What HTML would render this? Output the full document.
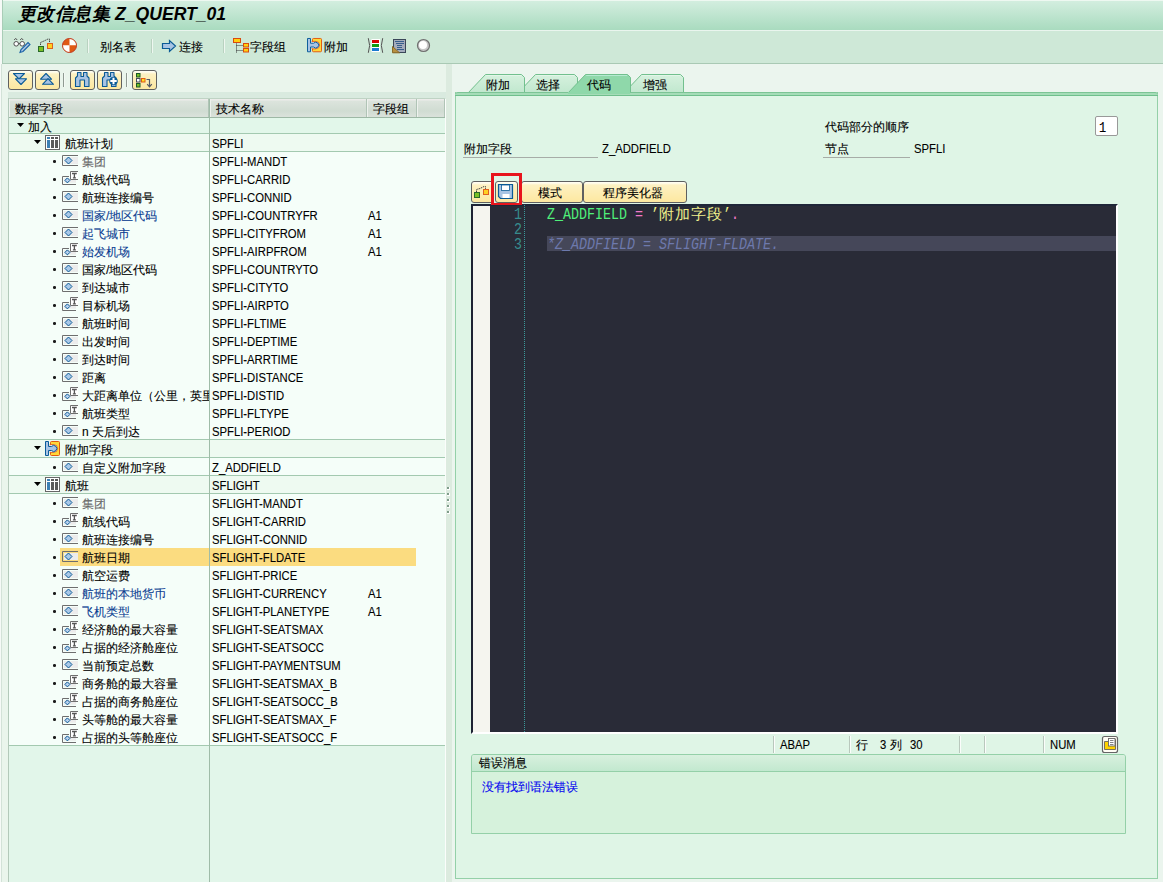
<!DOCTYPE html>
<html><head><meta charset="utf-8"><style>
*{box-sizing:border-box}
html,body{margin:0;padding:0}
body{width:1163px;height:882px;overflow:hidden;position:relative;background:#ebf5ee;font-family:"Liberation Sans",sans-serif;font-size:12px;color:#000}
.ab{position:absolute}
.t{position:absolute;white-space:nowrap;line-height:14px;-webkit-text-stroke:0.1px currentColor}
.lat{font-size:12px;transform:scaleX(0.94);transform-origin:0 0;-webkit-text-stroke:0.1px currentColor}
.sep{position:absolute;width:2px;border-left:1px solid #b9d2c0;border-right:1px solid #eef7f0}
.btn{position:absolute;border:1px solid #5f6060;border-radius:3px;background:linear-gradient(#fffdf0 0,#fffdf0 1px,#fdf1c2 3px,#fde8a0 100%)}
</style></head><body>

<div class="ab" style="left:0;top:0;width:1163px;height:1px;background:#eef8f1"></div>
<div class="ab" style="left:0;top:1px;width:1163px;height:29px;background:linear-gradient(#d3eedf,#a9dbbf)"></div>
<div class="ab" style="left:0;top:30px;width:1163px;height:1px;background:#eaf5ee"></div>
<div class="t" style="left:18px;top:4px;font-size:18px;line-height:20px;font-weight:bold;font-style:italic;letter-spacing:0.4px;-webkit-text-stroke:0">更改信息集</div>
<div class="t" style="left:115px;top:4px;font-size:17.6px;line-height:20px;font-weight:bold;font-style:italic;-webkit-text-stroke:0">Z_QUERT_01</div>
<div class="ab" style="left:0;top:31px;width:1163px;height:32px;background:#cee8d7"></div>
<div class="ab" style="left:0;top:63px;width:1163px;height:1px;background:#a9c9b4"></div>
<div class="ab" style="left:0;top:0;width:2px;height:882px;background:#f6faf7"></div>
<div class="ab" style="left:2px;top:0;width:1px;height:63px;background:#a9cdb7"></div>
<div class="t" style="left:100px;top:40px">别名表</div>
<div class="t" style="left:179px;top:40px">连接</div>
<div class="t" style="left:250px;top:40px">字段组</div>
<div class="t" style="left:324px;top:40px">附加</div>
<div class="sep" style="left:87px;top:39px;height:14px"></div>
<div class="sep" style="left:151px;top:39px;height:14px"></div>
<div class="sep" style="left:223px;top:39px;height:14px"></div>
<div class="ab" style="left:2px;top:64px;width:444px;height:818px;background:#eaf5ec"></div>
<div class="ab" style="left:1px;top:64px;width:1px;height:818px;background:#d3e2d8"></div>
<div class="ab" style="left:446px;top:64px;width:6px;height:818px;background:#dcebdf"></div>
<div class="ab" style="left:447px;top:487px;width:3px;height:3px;background:#fff"></div><div class="ab" style="left:447px;top:487px;width:2px;height:2px;background:#7f9c8a"></div>
<div class="ab" style="left:447px;top:493px;width:3px;height:3px;background:#fff"></div><div class="ab" style="left:447px;top:493px;width:2px;height:2px;background:#7f9c8a"></div>
<div class="ab" style="left:447px;top:499px;width:3px;height:3px;background:#fff"></div><div class="ab" style="left:447px;top:499px;width:2px;height:2px;background:#7f9c8a"></div>
<div class="ab" style="left:447px;top:505px;width:3px;height:3px;background:#fff"></div><div class="ab" style="left:447px;top:505px;width:2px;height:2px;background:#7f9c8a"></div>
<div class="ab" style="left:447px;top:511px;width:3px;height:3px;background:#fff"></div><div class="ab" style="left:447px;top:511px;width:2px;height:2px;background:#7f9c8a"></div>
<div class="btn" style="left:8px;top:70px;width:25px;height:20px"></div>
<div class="btn" style="left:35px;top:70px;width:25px;height:20px"></div>
<div class="btn" style="left:70px;top:70px;width:25px;height:20px"></div>
<div class="btn" style="left:97px;top:70px;width:25px;height:20px"></div>
<div class="btn" style="left:132px;top:70px;width:25px;height:20px"></div>
<div class="sep" style="left:63px;top:73px;height:14px;border-left-color:#8f9a92;border-right-color:#f4faf5"></div>
<div class="sep" style="left:126px;top:73px;height:14px;border-left-color:#8f9a92;border-right-color:#f4faf5"></div>
<div class="ab" style="left:8px;top:92px;width:438px;height:790px;background:#d9eadf"></div>
<div class="ab" style="left:8px;top:98px;width:1px;height:784px;background:#b3c9ba"></div>
<div class="ab" style="left:9px;top:98px;width:436px;height:1px;background:#bfd3c4"></div>
<div class="ab" style="left:9px;top:99px;width:200px;height:18px;background:linear-gradient(#ececea 0,#ececea 1px,#dce4dd 2px,#d0dcd2 12px,#d9e1da 17px);border-left:1px solid #eef2ee;border-right:1px solid #b0c4b6"></div>
<div class="t" style="left:15px;top:102px">数据字段</div>
<div class="ab" style="left:210px;top:99px;width:157px;height:18px;background:linear-gradient(#ececea 0,#ececea 1px,#dce4dd 2px,#d0dcd2 12px,#d9e1da 17px);border-left:1px solid #eef2ee;border-right:1px solid #b0c4b6"></div>
<div class="t" style="left:216px;top:102px">技术名称</div>
<div class="ab" style="left:367px;top:99px;width:50px;height:18px;background:linear-gradient(#ececea 0,#ececea 1px,#dce4dd 2px,#d0dcd2 12px,#d9e1da 17px);border-left:1px solid #eef2ee;border-right:1px solid #b0c4b6"></div>
<div class="t" style="left:373px;top:102px">字段组</div>
<div class="ab" style="left:417px;top:99px;width:28px;height:18px;background:linear-gradient(#ececea 0,#ececea 1px,#dce4dd 2px,#d0dcd2 12px,#d9e1da 17px);border-left:1px solid #eef2ee;border-right:1px solid #b0c4b6"></div>
<div class="ab" style="left:9px;top:117px;width:436px;height:1px;background:#9db8a5"></div>
<div class="ab" style="left:9px;top:118px;width:436px;height:764px;background:#e2f6ea"></div>
<div class="ab" style="left:445px;top:99px;width:1px;height:783px;background:#fbfdfb"></div>
<div class="ab" style="left:9px;top:118px;width:436px;height:16px;background:#e2f7ea"></div>
<div class="ab" style="left:9px;top:133px;width:436px;height:1px;background:#a3c9b0"></div>
<svg class="ab" style="left:17px;top:123px" width="7" height="4" viewBox="0 0 7 4"><path d="M0 0H7L3.5 4Z" fill="#000"/></svg>
<div class="t" style="left:28px;top:120px">加入</div>
<div class="ab" style="left:9px;top:134px;width:436px;height:18px;background:#eefaf1"></div>
<div class="ab" style="left:9px;top:151px;width:436px;height:1px;background:#a3c9b0"></div>
<svg class="ab" style="left:34px;top:140px" width="7" height="4" viewBox="0 0 7 4"><path d="M0 0H7L3.5 4Z" fill="#000"/></svg>
<svg class="ab" style="left:45px;top:135px" width="15" height="15" viewBox="0 0 15 15"><rect x=".5" y=".5" width="14" height="14" fill="#fff" stroke="#666"/><rect x="2" y="2" width="3" height="2" fill="#3c80b4"/><rect x="6" y="2" width="3" height="2" fill="#5a5a5a"/><rect x="10" y="2" width="3" height="2" fill="#5a5a5a"/><rect x="2" y="5" width="3" height="8" fill="#3c80b4"/><rect x="6" y="5" width="3" height="8" fill="#5a5a5a"/><rect x="10" y="5" width="3" height="8" fill="#5a5a5a"/></svg>
<div class="t" style="left:65px;top:137px">航班计划</div>
<div class="t lat" style="left:212px;top:137px">SPFLI</div>
<div class="ab" style="left:9px;top:152px;width:436px;height:18px;background:#f5fef9"></div>
<div class="ab" style="left:53px;top:160px;width:2.6px;height:2.6px;border-radius:50%;background:#1a1a1a"></div>
<svg class="ab" style="left:62px;top:155px" width="16" height="11" viewBox="0 0 16 11"><path d="M16 .5H.5v10H16" fill="none" stroke="#6e6e6e"/><rect x="2" y="2" width="14" height="7" fill="#ececec"/><path d="M6.5 2 L10 5.5 L6.5 9 L3 5.5Z" fill="#a9c8e8" stroke="#0a5a96" stroke-width="1"/></svg>
<div class="t" style="left:82px;top:155px;width:127px;overflow:hidden;color:#6a6a6a">集团</div>
<div class="t lat" style="left:212px;top:155px">SPFLI-MANDT</div>
<div class="ab" style="left:9px;top:170px;width:436px;height:18px;background:#f5fef9"></div>
<div class="ab" style="left:53px;top:178px;width:2.6px;height:2.6px;border-radius:50%;background:#1a1a1a"></div>
<svg class="ab" style="left:62px;top:171px" width="16" height="14" viewBox="0 0 16 14"><path d="M7 5.5H.5v8H14" fill="none" stroke="#6e6e6e"/><rect x="2" y="7" width="12" height="4.7" fill="#ececec"/><path d="M5.4 6.9L7.9 9.4L5.4 11.9L2.9 9.4Z" fill="#b8d0ec" stroke="#0a5a96" stroke-width="1"/><rect x="8.5" y=".5" width="7.5" height="8" fill="#fff"/><path d="M16 .5H8.5V8.5H16" fill="none" stroke="#6e6e6e"/><path d="M10 2.5H14.8M12.4 2.5V6.8M10.9 6.8H13.9" stroke="#555" stroke-width="1.3" fill="none"/></svg>
<div class="t" style="left:82px;top:173px;width:127px;overflow:hidden;color:#000">航线代码</div>
<div class="t lat" style="left:212px;top:173px">SPFLI-CARRID</div>
<div class="ab" style="left:9px;top:188px;width:436px;height:18px;background:#f5fef9"></div>
<div class="ab" style="left:53px;top:196px;width:2.6px;height:2.6px;border-radius:50%;background:#1a1a1a"></div>
<svg class="ab" style="left:62px;top:191px" width="16" height="11" viewBox="0 0 16 11"><path d="M16 .5H.5v10H16" fill="none" stroke="#6e6e6e"/><rect x="2" y="2" width="14" height="7" fill="#ececec"/><path d="M6.5 2 L10 5.5 L6.5 9 L3 5.5Z" fill="#a9c8e8" stroke="#0a5a96" stroke-width="1"/></svg>
<div class="t" style="left:82px;top:191px;width:127px;overflow:hidden;color:#000">航班连接编号</div>
<div class="t lat" style="left:212px;top:191px">SPFLI-CONNID</div>
<div class="ab" style="left:9px;top:206px;width:436px;height:18px;background:#f5fef9"></div>
<div class="ab" style="left:53px;top:214px;width:2.6px;height:2.6px;border-radius:50%;background:#1a1a1a"></div>
<svg class="ab" style="left:62px;top:209px" width="16" height="11" viewBox="0 0 16 11"><path d="M16 .5H.5v10H16" fill="none" stroke="#6e6e6e"/><rect x="2" y="2" width="14" height="7" fill="#ececec"/><path d="M6.5 2 L10 5.5 L6.5 9 L3 5.5Z" fill="#a9c8e8" stroke="#0a5a96" stroke-width="1"/></svg>
<div class="t" style="left:82px;top:209px;width:127px;overflow:hidden;color:#0b3d91">国家/地区代码</div>
<div class="t lat" style="left:212px;top:209px">SPFLI-COUNTRYFR</div>
<div class="t lat" style="left:368px;top:209px">A1</div>
<div class="ab" style="left:9px;top:224px;width:436px;height:18px;background:#f5fef9"></div>
<div class="ab" style="left:53px;top:232px;width:2.6px;height:2.6px;border-radius:50%;background:#1a1a1a"></div>
<svg class="ab" style="left:62px;top:227px" width="16" height="11" viewBox="0 0 16 11"><path d="M16 .5H.5v10H16" fill="none" stroke="#6e6e6e"/><rect x="2" y="2" width="14" height="7" fill="#ececec"/><path d="M6.5 2 L10 5.5 L6.5 9 L3 5.5Z" fill="#a9c8e8" stroke="#0a5a96" stroke-width="1"/></svg>
<div class="t" style="left:82px;top:227px;width:127px;overflow:hidden;color:#0b3d91">起飞城市</div>
<div class="t lat" style="left:212px;top:227px">SPFLI-CITYFROM</div>
<div class="t lat" style="left:368px;top:227px">A1</div>
<div class="ab" style="left:9px;top:242px;width:436px;height:18px;background:#f5fef9"></div>
<div class="ab" style="left:53px;top:250px;width:2.6px;height:2.6px;border-radius:50%;background:#1a1a1a"></div>
<svg class="ab" style="left:62px;top:243px" width="16" height="14" viewBox="0 0 16 14"><path d="M7 5.5H.5v8H14" fill="none" stroke="#6e6e6e"/><rect x="2" y="7" width="12" height="4.7" fill="#ececec"/><path d="M5.4 6.9L7.9 9.4L5.4 11.9L2.9 9.4Z" fill="#b8d0ec" stroke="#0a5a96" stroke-width="1"/><rect x="8.5" y=".5" width="7.5" height="8" fill="#fff"/><path d="M16 .5H8.5V8.5H16" fill="none" stroke="#6e6e6e"/><path d="M10 2.5H14.8M12.4 2.5V6.8M10.9 6.8H13.9" stroke="#555" stroke-width="1.3" fill="none"/></svg>
<div class="t" style="left:82px;top:245px;width:127px;overflow:hidden;color:#0b3d91">始发机场</div>
<div class="t lat" style="left:212px;top:245px">SPFLI-AIRPFROM</div>
<div class="t lat" style="left:368px;top:245px">A1</div>
<div class="ab" style="left:9px;top:260px;width:436px;height:18px;background:#f5fef9"></div>
<div class="ab" style="left:53px;top:268px;width:2.6px;height:2.6px;border-radius:50%;background:#1a1a1a"></div>
<svg class="ab" style="left:62px;top:263px" width="16" height="11" viewBox="0 0 16 11"><path d="M16 .5H.5v10H16" fill="none" stroke="#6e6e6e"/><rect x="2" y="2" width="14" height="7" fill="#ececec"/><path d="M6.5 2 L10 5.5 L6.5 9 L3 5.5Z" fill="#a9c8e8" stroke="#0a5a96" stroke-width="1"/></svg>
<div class="t" style="left:82px;top:263px;width:127px;overflow:hidden;color:#000">国家/地区代码</div>
<div class="t lat" style="left:212px;top:263px">SPFLI-COUNTRYTO</div>
<div class="ab" style="left:9px;top:278px;width:436px;height:18px;background:#f5fef9"></div>
<div class="ab" style="left:53px;top:286px;width:2.6px;height:2.6px;border-radius:50%;background:#1a1a1a"></div>
<svg class="ab" style="left:62px;top:281px" width="16" height="11" viewBox="0 0 16 11"><path d="M16 .5H.5v10H16" fill="none" stroke="#6e6e6e"/><rect x="2" y="2" width="14" height="7" fill="#ececec"/><path d="M6.5 2 L10 5.5 L6.5 9 L3 5.5Z" fill="#a9c8e8" stroke="#0a5a96" stroke-width="1"/></svg>
<div class="t" style="left:82px;top:281px;width:127px;overflow:hidden;color:#000">到达城市</div>
<div class="t lat" style="left:212px;top:281px">SPFLI-CITYTO</div>
<div class="ab" style="left:9px;top:296px;width:436px;height:18px;background:#f5fef9"></div>
<div class="ab" style="left:53px;top:304px;width:2.6px;height:2.6px;border-radius:50%;background:#1a1a1a"></div>
<svg class="ab" style="left:62px;top:297px" width="16" height="14" viewBox="0 0 16 14"><path d="M7 5.5H.5v8H14" fill="none" stroke="#6e6e6e"/><rect x="2" y="7" width="12" height="4.7" fill="#ececec"/><path d="M5.4 6.9L7.9 9.4L5.4 11.9L2.9 9.4Z" fill="#b8d0ec" stroke="#0a5a96" stroke-width="1"/><rect x="8.5" y=".5" width="7.5" height="8" fill="#fff"/><path d="M16 .5H8.5V8.5H16" fill="none" stroke="#6e6e6e"/><path d="M10 2.5H14.8M12.4 2.5V6.8M10.9 6.8H13.9" stroke="#555" stroke-width="1.3" fill="none"/></svg>
<div class="t" style="left:82px;top:299px;width:127px;overflow:hidden;color:#000">目标机场</div>
<div class="t lat" style="left:212px;top:299px">SPFLI-AIRPTO</div>
<div class="ab" style="left:9px;top:314px;width:436px;height:18px;background:#f5fef9"></div>
<div class="ab" style="left:53px;top:322px;width:2.6px;height:2.6px;border-radius:50%;background:#1a1a1a"></div>
<svg class="ab" style="left:62px;top:317px" width="16" height="11" viewBox="0 0 16 11"><path d="M16 .5H.5v10H16" fill="none" stroke="#6e6e6e"/><rect x="2" y="2" width="14" height="7" fill="#ececec"/><path d="M6.5 2 L10 5.5 L6.5 9 L3 5.5Z" fill="#a9c8e8" stroke="#0a5a96" stroke-width="1"/></svg>
<div class="t" style="left:82px;top:317px;width:127px;overflow:hidden;color:#000">航班时间</div>
<div class="t lat" style="left:212px;top:317px">SPFLI-FLTIME</div>
<div class="ab" style="left:9px;top:332px;width:436px;height:18px;background:#f5fef9"></div>
<div class="ab" style="left:53px;top:340px;width:2.6px;height:2.6px;border-radius:50%;background:#1a1a1a"></div>
<svg class="ab" style="left:62px;top:335px" width="16" height="11" viewBox="0 0 16 11"><path d="M16 .5H.5v10H16" fill="none" stroke="#6e6e6e"/><rect x="2" y="2" width="14" height="7" fill="#ececec"/><path d="M6.5 2 L10 5.5 L6.5 9 L3 5.5Z" fill="#a9c8e8" stroke="#0a5a96" stroke-width="1"/></svg>
<div class="t" style="left:82px;top:335px;width:127px;overflow:hidden;color:#000">出发时间</div>
<div class="t lat" style="left:212px;top:335px">SPFLI-DEPTIME</div>
<div class="ab" style="left:9px;top:350px;width:436px;height:18px;background:#f5fef9"></div>
<div class="ab" style="left:53px;top:358px;width:2.6px;height:2.6px;border-radius:50%;background:#1a1a1a"></div>
<svg class="ab" style="left:62px;top:353px" width="16" height="11" viewBox="0 0 16 11"><path d="M16 .5H.5v10H16" fill="none" stroke="#6e6e6e"/><rect x="2" y="2" width="14" height="7" fill="#ececec"/><path d="M6.5 2 L10 5.5 L6.5 9 L3 5.5Z" fill="#a9c8e8" stroke="#0a5a96" stroke-width="1"/></svg>
<div class="t" style="left:82px;top:353px;width:127px;overflow:hidden;color:#000">到达时间</div>
<div class="t lat" style="left:212px;top:353px">SPFLI-ARRTIME</div>
<div class="ab" style="left:9px;top:368px;width:436px;height:18px;background:#f5fef9"></div>
<div class="ab" style="left:53px;top:376px;width:2.6px;height:2.6px;border-radius:50%;background:#1a1a1a"></div>
<svg class="ab" style="left:62px;top:371px" width="16" height="11" viewBox="0 0 16 11"><path d="M16 .5H.5v10H16" fill="none" stroke="#6e6e6e"/><rect x="2" y="2" width="14" height="7" fill="#ececec"/><path d="M6.5 2 L10 5.5 L6.5 9 L3 5.5Z" fill="#a9c8e8" stroke="#0a5a96" stroke-width="1"/></svg>
<div class="t" style="left:82px;top:371px;width:127px;overflow:hidden;color:#000">距离</div>
<div class="t lat" style="left:212px;top:371px">SPFLI-DISTANCE</div>
<div class="ab" style="left:9px;top:386px;width:436px;height:18px;background:#f5fef9"></div>
<div class="ab" style="left:53px;top:394px;width:2.6px;height:2.6px;border-radius:50%;background:#1a1a1a"></div>
<svg class="ab" style="left:62px;top:387px" width="16" height="14" viewBox="0 0 16 14"><path d="M7 5.5H.5v8H14" fill="none" stroke="#6e6e6e"/><rect x="2" y="7" width="12" height="4.7" fill="#ececec"/><path d="M5.4 6.9L7.9 9.4L5.4 11.9L2.9 9.4Z" fill="#b8d0ec" stroke="#0a5a96" stroke-width="1"/><rect x="8.5" y=".5" width="7.5" height="8" fill="#fff"/><path d="M16 .5H8.5V8.5H16" fill="none" stroke="#6e6e6e"/><path d="M10 2.5H14.8M12.4 2.5V6.8M10.9 6.8H13.9" stroke="#555" stroke-width="1.3" fill="none"/></svg>
<div class="t" style="left:82px;top:389px;width:127px;overflow:hidden;color:#000">大距离单位（公里，英里）</div>
<div class="t lat" style="left:212px;top:389px">SPFLI-DISTID</div>
<div class="ab" style="left:9px;top:404px;width:436px;height:18px;background:#f5fef9"></div>
<div class="ab" style="left:53px;top:412px;width:2.6px;height:2.6px;border-radius:50%;background:#1a1a1a"></div>
<svg class="ab" style="left:62px;top:405px" width="16" height="14" viewBox="0 0 16 14"><path d="M7 5.5H.5v8H14" fill="none" stroke="#6e6e6e"/><rect x="2" y="7" width="12" height="4.7" fill="#ececec"/><path d="M5.4 6.9L7.9 9.4L5.4 11.9L2.9 9.4Z" fill="#b8d0ec" stroke="#0a5a96" stroke-width="1"/><rect x="8.5" y=".5" width="7.5" height="8" fill="#fff"/><path d="M16 .5H8.5V8.5H16" fill="none" stroke="#6e6e6e"/><path d="M10 2.5H14.8M12.4 2.5V6.8M10.9 6.8H13.9" stroke="#555" stroke-width="1.3" fill="none"/></svg>
<div class="t" style="left:82px;top:407px;width:127px;overflow:hidden;color:#000">航班类型</div>
<div class="t lat" style="left:212px;top:407px">SPFLI-FLTYPE</div>
<div class="ab" style="left:9px;top:422px;width:436px;height:18px;background:#f5fef9"></div>
<div class="ab" style="left:9px;top:439px;width:436px;height:1px;background:#a3c9b0"></div>
<div class="ab" style="left:53px;top:430px;width:2.6px;height:2.6px;border-radius:50%;background:#1a1a1a"></div>
<svg class="ab" style="left:62px;top:425px" width="16" height="11" viewBox="0 0 16 11"><path d="M16 .5H.5v10H16" fill="none" stroke="#6e6e6e"/><rect x="2" y="2" width="14" height="7" fill="#ececec"/><path d="M6.5 2 L10 5.5 L6.5 9 L3 5.5Z" fill="#a9c8e8" stroke="#0a5a96" stroke-width="1"/></svg>
<div class="t" style="left:82px;top:425px;width:127px;overflow:hidden;color:#000">n 天后到达</div>
<div class="t lat" style="left:212px;top:425px">SPFLI-PERIOD</div>
<div class="ab" style="left:9px;top:440px;width:436px;height:18px;background:#eefaf1"></div>
<div class="ab" style="left:9px;top:457px;width:436px;height:1px;background:#a3c9b0"></div>
<svg class="ab" style="left:34px;top:446px" width="7" height="4" viewBox="0 0 7 4"><path d="M0 0H7L3.5 4Z" fill="#000"/></svg>
<svg class="ab" style="left:45px;top:441px" width="16" height="15" viewBox="0 0 16 15"><rect x="5.5" y=".5" width="9" height="14" rx="1" fill="#ffd838" stroke="#e05a10"/><path d="M5 3.6H8.7A3.9 3.9 0 0 1 8.7 11.4H5Z" fill="#e4f2fa" stroke="#e05a10" stroke-width="0.9"/><rect x="4" y="4.3" width="2" height="6.4" fill="#e4f2fa"/><path d="M.5 .5H3.5V5.5H6.5A3 3 0 1 1 6.5 9.5H3.5V14.5H.5Z" fill="#a8c4e4" stroke="#0a5c9a"/></svg>
<div class="t" style="left:65px;top:443px">附加字段</div>
<div class="ab" style="left:9px;top:458px;width:436px;height:18px;background:#f5fef9"></div>
<div class="ab" style="left:9px;top:475px;width:436px;height:1px;background:#a3c9b0"></div>
<div class="ab" style="left:53px;top:466px;width:2.6px;height:2.6px;border-radius:50%;background:#1a1a1a"></div>
<svg class="ab" style="left:62px;top:461px" width="16" height="11" viewBox="0 0 16 11"><path d="M16 .5H.5v10H16" fill="none" stroke="#6e6e6e"/><rect x="2" y="2" width="14" height="7" fill="#ececec"/><path d="M6.5 2 L10 5.5 L6.5 9 L3 5.5Z" fill="#a9c8e8" stroke="#0a5a96" stroke-width="1"/></svg>
<div class="t" style="left:82px;top:461px;width:127px;overflow:hidden;color:#000">自定义附加字段</div>
<div class="t lat" style="left:212px;top:461px">Z_ADDFIELD</div>
<div class="ab" style="left:9px;top:476px;width:436px;height:18px;background:#eefaf1"></div>
<div class="ab" style="left:9px;top:493px;width:436px;height:1px;background:#a3c9b0"></div>
<svg class="ab" style="left:34px;top:482px" width="7" height="4" viewBox="0 0 7 4"><path d="M0 0H7L3.5 4Z" fill="#000"/></svg>
<svg class="ab" style="left:45px;top:477px" width="15" height="15" viewBox="0 0 15 15"><rect x=".5" y=".5" width="14" height="14" fill="#fff" stroke="#666"/><rect x="2" y="2" width="3" height="2" fill="#3c80b4"/><rect x="6" y="2" width="3" height="2" fill="#5a5a5a"/><rect x="10" y="2" width="3" height="2" fill="#5a5a5a"/><rect x="2" y="5" width="3" height="8" fill="#3c80b4"/><rect x="6" y="5" width="3" height="8" fill="#5a5a5a"/><rect x="10" y="5" width="3" height="8" fill="#5a5a5a"/></svg>
<div class="t" style="left:65px;top:479px">航班</div>
<div class="t lat" style="left:212px;top:479px">SFLIGHT</div>
<div class="ab" style="left:9px;top:494px;width:436px;height:18px;background:#f5fef9"></div>
<div class="ab" style="left:53px;top:502px;width:2.6px;height:2.6px;border-radius:50%;background:#1a1a1a"></div>
<svg class="ab" style="left:62px;top:497px" width="16" height="11" viewBox="0 0 16 11"><path d="M16 .5H.5v10H16" fill="none" stroke="#6e6e6e"/><rect x="2" y="2" width="14" height="7" fill="#ececec"/><path d="M6.5 2 L10 5.5 L6.5 9 L3 5.5Z" fill="#a9c8e8" stroke="#0a5a96" stroke-width="1"/></svg>
<div class="t" style="left:82px;top:497px;width:127px;overflow:hidden;color:#6a6a6a">集团</div>
<div class="t lat" style="left:212px;top:497px">SFLIGHT-MANDT</div>
<div class="ab" style="left:9px;top:512px;width:436px;height:18px;background:#f5fef9"></div>
<div class="ab" style="left:53px;top:520px;width:2.6px;height:2.6px;border-radius:50%;background:#1a1a1a"></div>
<svg class="ab" style="left:62px;top:513px" width="16" height="14" viewBox="0 0 16 14"><path d="M7 5.5H.5v8H14" fill="none" stroke="#6e6e6e"/><rect x="2" y="7" width="12" height="4.7" fill="#ececec"/><path d="M5.4 6.9L7.9 9.4L5.4 11.9L2.9 9.4Z" fill="#b8d0ec" stroke="#0a5a96" stroke-width="1"/><rect x="8.5" y=".5" width="7.5" height="8" fill="#fff"/><path d="M16 .5H8.5V8.5H16" fill="none" stroke="#6e6e6e"/><path d="M10 2.5H14.8M12.4 2.5V6.8M10.9 6.8H13.9" stroke="#555" stroke-width="1.3" fill="none"/></svg>
<div class="t" style="left:82px;top:515px;width:127px;overflow:hidden;color:#000">航线代码</div>
<div class="t lat" style="left:212px;top:515px">SFLIGHT-CARRID</div>
<div class="ab" style="left:9px;top:530px;width:436px;height:18px;background:#f5fef9"></div>
<div class="ab" style="left:53px;top:538px;width:2.6px;height:2.6px;border-radius:50%;background:#1a1a1a"></div>
<svg class="ab" style="left:62px;top:533px" width="16" height="11" viewBox="0 0 16 11"><path d="M16 .5H.5v10H16" fill="none" stroke="#6e6e6e"/><rect x="2" y="2" width="14" height="7" fill="#ececec"/><path d="M6.5 2 L10 5.5 L6.5 9 L3 5.5Z" fill="#a9c8e8" stroke="#0a5a96" stroke-width="1"/></svg>
<div class="t" style="left:82px;top:533px;width:127px;overflow:hidden;color:#000">航班连接编号</div>
<div class="t lat" style="left:212px;top:533px">SFLIGHT-CONNID</div>
<div class="ab" style="left:9px;top:548px;width:436px;height:18px;background:#f5fef9"></div>
<div class="ab" style="left:60px;top:548px;width:356px;height:18px;background:#fbdc80"></div>
<div class="ab" style="left:53px;top:556px;width:2.6px;height:2.6px;border-radius:50%;background:#1a1a1a"></div>
<svg class="ab" style="left:62px;top:551px" width="16" height="11" viewBox="0 0 16 11"><path d="M16 .5H.5v10H16" fill="none" stroke="#6e6e6e"/><rect x="2" y="2" width="14" height="7" fill="#ececec"/><path d="M6.5 2 L10 5.5 L6.5 9 L3 5.5Z" fill="#a9c8e8" stroke="#0a5a96" stroke-width="1"/></svg>
<div class="t" style="left:82px;top:551px;width:127px;overflow:hidden;color:#000">航班日期</div>
<div class="t lat" style="left:212px;top:551px">SFLIGHT-FLDATE</div>
<div class="ab" style="left:9px;top:566px;width:436px;height:18px;background:#f5fef9"></div>
<div class="ab" style="left:53px;top:574px;width:2.6px;height:2.6px;border-radius:50%;background:#1a1a1a"></div>
<svg class="ab" style="left:62px;top:569px" width="16" height="11" viewBox="0 0 16 11"><path d="M16 .5H.5v10H16" fill="none" stroke="#6e6e6e"/><rect x="2" y="2" width="14" height="7" fill="#ececec"/><path d="M6.5 2 L10 5.5 L6.5 9 L3 5.5Z" fill="#a9c8e8" stroke="#0a5a96" stroke-width="1"/></svg>
<div class="t" style="left:82px;top:569px;width:127px;overflow:hidden;color:#000">航空运费</div>
<div class="t lat" style="left:212px;top:569px">SFLIGHT-PRICE</div>
<div class="ab" style="left:9px;top:584px;width:436px;height:18px;background:#f5fef9"></div>
<div class="ab" style="left:53px;top:592px;width:2.6px;height:2.6px;border-radius:50%;background:#1a1a1a"></div>
<svg class="ab" style="left:62px;top:587px" width="16" height="11" viewBox="0 0 16 11"><path d="M16 .5H.5v10H16" fill="none" stroke="#6e6e6e"/><rect x="2" y="2" width="14" height="7" fill="#ececec"/><path d="M6.5 2 L10 5.5 L6.5 9 L3 5.5Z" fill="#a9c8e8" stroke="#0a5a96" stroke-width="1"/></svg>
<div class="t" style="left:82px;top:587px;width:127px;overflow:hidden;color:#0b3d91">航班的本地货币</div>
<div class="t lat" style="left:212px;top:587px">SFLIGHT-CURRENCY</div>
<div class="t lat" style="left:368px;top:587px">A1</div>
<div class="ab" style="left:9px;top:602px;width:436px;height:18px;background:#f5fef9"></div>
<div class="ab" style="left:53px;top:610px;width:2.6px;height:2.6px;border-radius:50%;background:#1a1a1a"></div>
<svg class="ab" style="left:62px;top:605px" width="16" height="11" viewBox="0 0 16 11"><path d="M16 .5H.5v10H16" fill="none" stroke="#6e6e6e"/><rect x="2" y="2" width="14" height="7" fill="#ececec"/><path d="M6.5 2 L10 5.5 L6.5 9 L3 5.5Z" fill="#a9c8e8" stroke="#0a5a96" stroke-width="1"/></svg>
<div class="t" style="left:82px;top:605px;width:127px;overflow:hidden;color:#0b3d91">飞机类型</div>
<div class="t lat" style="left:212px;top:605px">SFLIGHT-PLANETYPE</div>
<div class="t lat" style="left:368px;top:605px">A1</div>
<div class="ab" style="left:9px;top:620px;width:436px;height:18px;background:#f5fef9"></div>
<div class="ab" style="left:53px;top:628px;width:2.6px;height:2.6px;border-radius:50%;background:#1a1a1a"></div>
<svg class="ab" style="left:62px;top:621px" width="16" height="14" viewBox="0 0 16 14"><path d="M7 5.5H.5v8H14" fill="none" stroke="#6e6e6e"/><rect x="2" y="7" width="12" height="4.7" fill="#ececec"/><path d="M5.4 6.9L7.9 9.4L5.4 11.9L2.9 9.4Z" fill="#b8d0ec" stroke="#0a5a96" stroke-width="1"/><rect x="8.5" y=".5" width="7.5" height="8" fill="#fff"/><path d="M16 .5H8.5V8.5H16" fill="none" stroke="#6e6e6e"/><path d="M10 2.5H14.8M12.4 2.5V6.8M10.9 6.8H13.9" stroke="#555" stroke-width="1.3" fill="none"/></svg>
<div class="t" style="left:82px;top:623px;width:127px;overflow:hidden;color:#000">经济舱的最大容量</div>
<div class="t lat" style="left:212px;top:623px">SFLIGHT-SEATSMAX</div>
<div class="ab" style="left:9px;top:638px;width:436px;height:18px;background:#f5fef9"></div>
<div class="ab" style="left:53px;top:646px;width:2.6px;height:2.6px;border-radius:50%;background:#1a1a1a"></div>
<svg class="ab" style="left:62px;top:639px" width="16" height="14" viewBox="0 0 16 14"><path d="M7 5.5H.5v8H14" fill="none" stroke="#6e6e6e"/><rect x="2" y="7" width="12" height="4.7" fill="#ececec"/><path d="M5.4 6.9L7.9 9.4L5.4 11.9L2.9 9.4Z" fill="#b8d0ec" stroke="#0a5a96" stroke-width="1"/><rect x="8.5" y=".5" width="7.5" height="8" fill="#fff"/><path d="M16 .5H8.5V8.5H16" fill="none" stroke="#6e6e6e"/><path d="M10 2.5H14.8M12.4 2.5V6.8M10.9 6.8H13.9" stroke="#555" stroke-width="1.3" fill="none"/></svg>
<div class="t" style="left:82px;top:641px;width:127px;overflow:hidden;color:#000">占据的经济舱座位</div>
<div class="t lat" style="left:212px;top:641px">SFLIGHT-SEATSOCC</div>
<div class="ab" style="left:9px;top:656px;width:436px;height:18px;background:#f5fef9"></div>
<div class="ab" style="left:53px;top:664px;width:2.6px;height:2.6px;border-radius:50%;background:#1a1a1a"></div>
<svg class="ab" style="left:62px;top:659px" width="16" height="11" viewBox="0 0 16 11"><path d="M16 .5H.5v10H16" fill="none" stroke="#6e6e6e"/><rect x="2" y="2" width="14" height="7" fill="#ececec"/><path d="M6.5 2 L10 5.5 L6.5 9 L3 5.5Z" fill="#a9c8e8" stroke="#0a5a96" stroke-width="1"/></svg>
<div class="t" style="left:82px;top:659px;width:127px;overflow:hidden;color:#000">当前预定总数</div>
<div class="t lat" style="left:212px;top:659px">SFLIGHT-PAYMENTSUM</div>
<div class="ab" style="left:9px;top:674px;width:436px;height:18px;background:#f5fef9"></div>
<div class="ab" style="left:53px;top:682px;width:2.6px;height:2.6px;border-radius:50%;background:#1a1a1a"></div>
<svg class="ab" style="left:62px;top:675px" width="16" height="14" viewBox="0 0 16 14"><path d="M7 5.5H.5v8H14" fill="none" stroke="#6e6e6e"/><rect x="2" y="7" width="12" height="4.7" fill="#ececec"/><path d="M5.4 6.9L7.9 9.4L5.4 11.9L2.9 9.4Z" fill="#b8d0ec" stroke="#0a5a96" stroke-width="1"/><rect x="8.5" y=".5" width="7.5" height="8" fill="#fff"/><path d="M16 .5H8.5V8.5H16" fill="none" stroke="#6e6e6e"/><path d="M10 2.5H14.8M12.4 2.5V6.8M10.9 6.8H13.9" stroke="#555" stroke-width="1.3" fill="none"/></svg>
<div class="t" style="left:82px;top:677px;width:127px;overflow:hidden;color:#000">商务舱的最大容量</div>
<div class="t lat" style="left:212px;top:677px">SFLIGHT-SEATSMAX_B</div>
<div class="ab" style="left:9px;top:692px;width:436px;height:18px;background:#f5fef9"></div>
<div class="ab" style="left:53px;top:700px;width:2.6px;height:2.6px;border-radius:50%;background:#1a1a1a"></div>
<svg class="ab" style="left:62px;top:693px" width="16" height="14" viewBox="0 0 16 14"><path d="M7 5.5H.5v8H14" fill="none" stroke="#6e6e6e"/><rect x="2" y="7" width="12" height="4.7" fill="#ececec"/><path d="M5.4 6.9L7.9 9.4L5.4 11.9L2.9 9.4Z" fill="#b8d0ec" stroke="#0a5a96" stroke-width="1"/><rect x="8.5" y=".5" width="7.5" height="8" fill="#fff"/><path d="M16 .5H8.5V8.5H16" fill="none" stroke="#6e6e6e"/><path d="M10 2.5H14.8M12.4 2.5V6.8M10.9 6.8H13.9" stroke="#555" stroke-width="1.3" fill="none"/></svg>
<div class="t" style="left:82px;top:695px;width:127px;overflow:hidden;color:#000">占据的商务舱座位</div>
<div class="t lat" style="left:212px;top:695px">SFLIGHT-SEATSOCC_B</div>
<div class="ab" style="left:9px;top:710px;width:436px;height:18px;background:#f5fef9"></div>
<div class="ab" style="left:53px;top:718px;width:2.6px;height:2.6px;border-radius:50%;background:#1a1a1a"></div>
<svg class="ab" style="left:62px;top:711px" width="16" height="14" viewBox="0 0 16 14"><path d="M7 5.5H.5v8H14" fill="none" stroke="#6e6e6e"/><rect x="2" y="7" width="12" height="4.7" fill="#ececec"/><path d="M5.4 6.9L7.9 9.4L5.4 11.9L2.9 9.4Z" fill="#b8d0ec" stroke="#0a5a96" stroke-width="1"/><rect x="8.5" y=".5" width="7.5" height="8" fill="#fff"/><path d="M16 .5H8.5V8.5H16" fill="none" stroke="#6e6e6e"/><path d="M10 2.5H14.8M12.4 2.5V6.8M10.9 6.8H13.9" stroke="#555" stroke-width="1.3" fill="none"/></svg>
<div class="t" style="left:82px;top:713px;width:127px;overflow:hidden;color:#000">头等舱的最大容量</div>
<div class="t lat" style="left:212px;top:713px">SFLIGHT-SEATSMAX_F</div>
<div class="ab" style="left:9px;top:728px;width:436px;height:18px;background:#f5fef9"></div>
<div class="ab" style="left:9px;top:745px;width:436px;height:1px;background:#a3c9b0"></div>
<div class="ab" style="left:53px;top:736px;width:2.6px;height:2.6px;border-radius:50%;background:#1a1a1a"></div>
<svg class="ab" style="left:62px;top:729px" width="16" height="14" viewBox="0 0 16 14"><path d="M7 5.5H.5v8H14" fill="none" stroke="#6e6e6e"/><rect x="2" y="7" width="12" height="4.7" fill="#ececec"/><path d="M5.4 6.9L7.9 9.4L5.4 11.9L2.9 9.4Z" fill="#b8d0ec" stroke="#0a5a96" stroke-width="1"/><rect x="8.5" y=".5" width="7.5" height="8" fill="#fff"/><path d="M16 .5H8.5V8.5H16" fill="none" stroke="#6e6e6e"/><path d="M10 2.5H14.8M12.4 2.5V6.8M10.9 6.8H13.9" stroke="#555" stroke-width="1.3" fill="none"/></svg>
<div class="t" style="left:82px;top:731px;width:127px;overflow:hidden;color:#000">占据的头等舱座位</div>
<div class="t lat" style="left:212px;top:731px">SFLIGHT-SEATSOCC_F</div>
<div class="ab" style="left:209px;top:99px;width:1px;height:783px;background:#9fbca8"></div>
<svg class="ab" style="left:517px;top:73px" width="62" height="21" viewBox="0 0 62 21"><defs><linearGradient id="tg" x1="0" y1="0" x2="0" y2="1"><stop offset="0" stop-color="#d6f1de"/><stop offset="1" stop-color="#bfe7cd"/></linearGradient></defs><path d="M0 21 L18.5 1.5 H57.5 L60.5 4.5 V21Z" fill="url(#tg)"/><path d="M19.2 2.5H57" stroke="#e2f6e8" stroke-width="1"/><path d="M0.5 20.5 L18.5 1.5 H57.5 L60.5 4.5 V21" fill="none" stroke="#72c08e" stroke-width="1"/></svg>
<div class="t" style="left:536px;top:78px">选择</div>
<svg class="ab" style="left:467px;top:73px" width="59" height="21" viewBox="0 0 59 21"><defs><linearGradient id="tg" x1="0" y1="0" x2="0" y2="1"><stop offset="0" stop-color="#d6f1de"/><stop offset="1" stop-color="#bfe7cd"/></linearGradient></defs><path d="M0 21 L18.5 1.5 H54.5 L57.5 4.5 V21Z" fill="url(#tg)"/><path d="M19.2 2.5H54" stroke="#e2f6e8" stroke-width="1"/><path d="M0.5 20.5 L18.5 1.5 H54.5 L57.5 4.5 V21" fill="none" stroke="#72c08e" stroke-width="1"/></svg>
<div class="t" style="left:486px;top:78px">附加</div>
<svg class="ab" style="left:623px;top:73px" width="62" height="21" viewBox="0 0 62 21"><defs><linearGradient id="tg" x1="0" y1="0" x2="0" y2="1"><stop offset="0" stop-color="#d6f1de"/><stop offset="1" stop-color="#bfe7cd"/></linearGradient></defs><path d="M0 21 L18.5 1.5 H57.5 L60.5 4.5 V21Z" fill="url(#tg)"/><path d="M19.2 2.5H57" stroke="#e2f6e8" stroke-width="1"/><path d="M0.5 20.5 L18.5 1.5 H57.5 L60.5 4.5 V21" fill="none" stroke="#72c08e" stroke-width="1"/></svg>
<div class="t" style="left:643px;top:78px">增强</div>
<svg class="ab" style="left:567px;top:73px" width="65" height="21" viewBox="0 0 65 21"><defs><linearGradient id="tg" x1="0" y1="0" x2="0" y2="1"><stop offset="0" stop-color="#d6f1de"/><stop offset="1" stop-color="#bfe7cd"/></linearGradient></defs><path d="M0 21 L18.5 1.5 H60.5 L63.5 4.5 V21Z" fill="#8fd8aa"/><path d="M19.2 2.5H60" stroke="#b4ead0" stroke-width="1"/><path d="M0.5 20.5 L18.5 1.5 H60.5 L63.5 4.5 V21" fill="none" stroke="#72c08e" stroke-width="1"/></svg>
<div class="t" style="left:587px;top:78px">代码</div>
<div class="ab" style="left:455px;top:92px;width:703px;height:787px;background:#dff5e6;border:1px solid #94d0a8;border-top:none"></div>
<div class="ab" style="left:455px;top:92px;width:703px;height:4px;background:#a5dcb8;border-top:1px solid #7cc495;border-bottom:1px solid #6fbf8c;border-radius:3px 3px 0 0"></div>
<div class="ab" style="left:568px;top:92px;width:62px;height:2px;background:#8fd8aa"></div>
<div class="t" style="left:464px;top:142px">附加字段</div>
<div class="ab" style="left:463px;top:157px;width:135px;height:1px;background:#a7aca7"></div>
<div class="t lat" style="left:602px;top:142px">Z_ADDFIELD</div>
<div class="t" style="left:825px;top:120px">代码部分的顺序</div>
<div class="t" style="left:825px;top:142px">节点</div>
<div class="ab" style="left:823px;top:157px;width:87px;height:1px;background:#a7aca7"></div>
<div class="t lat" style="left:914px;top:142px">SPFLI</div>
<div class="ab" style="left:1095px;top:116px;width:23px;height:20px;background:#fff;border:1px solid #999;border-radius:2px"></div>
<div class="t" style="left:1099px;top:119px;font-family:'Liberation Mono';font-size:12px;transform:scaleY(1.25);transform-origin:0 0">1</div>
<div class="btn" style="left:471px;top:181px;width:23px;height:22px"></div>
<div class="btn" style="left:495px;top:181px;width:23px;height:22px"></div>
<div class="btn" style="left:521px;top:181px;width:62px;height:22px"></div>
<div class="btn" style="left:583px;top:181px;width:104px;height:22px"></div>
<div class="t" style="left:538px;top:186px">模式</div>
<div class="t" style="left:603px;top:186px">程序美化器</div>
<div class="ab" style="left:491px;top:173px;width:31px;height:32px;border:3px solid #e8141c;border-bottom-width:2px;z-index:5"></div>
<div class="ab" style="left:471px;top:204px;width:647px;height:530px;background:#292b37;border-left:2px solid #1d2233;border-top:2px solid #1f2638;border-right:2px solid #fff;border-bottom:2px solid #fff"></div>
<div class="ab" style="left:473px;top:206px;width:17px;height:526px;background:#f5f5ef"></div>
<div class="ab" style="left:524px;top:205px;width:1px;height:527px;border-left:1px dotted #3a9a9a"></div>
<div class="ab" style="left:547px;top:236px;width:569px;height:15px;background:#454759"></div>
<div class="t" style="left:514px;top:206px;-webkit-text-stroke:0;font-family:'Liberation Mono',monospace;font-size:13.333px;line-height:15px;transform:scaleY(1.2);transform-origin:0 0;color:#3a9e9e;opacity:0.85">1</div>
<div class="t" style="left:514px;top:221px;-webkit-text-stroke:0;font-family:'Liberation Mono',monospace;font-size:13.333px;line-height:15px;transform:scaleY(1.2);transform-origin:0 0;color:#3a9e9e;opacity:0.85">2</div>
<div class="t" style="left:514px;top:236px;-webkit-text-stroke:0;font-family:'Liberation Mono',monospace;font-size:13.333px;line-height:15px;transform:scaleY(1.2);transform-origin:0 0;color:#3a9e9e;opacity:0.85">3</div>
<div class="t" style="left:547px;top:206px;-webkit-text-stroke:0;font-family:'Liberation Mono',monospace;font-size:13.333px;line-height:15px;transform:scaleY(1.2);transform-origin:0 0"><span style="color:#50f07a">Z_ADDFIELD</span> <span style="color:#f078c8">=</span> <span style="color:#f0f08c">’</span></div>
<div class="t" style="left:659px;top:206px;font-size:15px;line-height:16px;letter-spacing:1px;color:#f0f08c;-webkit-text-stroke:0">附加字段</div>
<div class="t" style="left:723px;top:206px;-webkit-text-stroke:0;font-family:'Liberation Mono',monospace;font-size:13.333px;line-height:15px;transform:scaleY(1.2);transform-origin:0 0"><span style="color:#f0f08c">’</span><span style="color:#f078c8">.</span></div>
<div class="t" style="left:547px;top:236px;-webkit-text-stroke:0;font-family:'Liberation Mono',monospace;font-size:13.333px;line-height:15px;transform:scaleY(1.2);transform-origin:0 0;font-style:italic;color:#7582bc;opacity:0.85">*Z_ADDFIELD = SFLIGHT-FLDATE.</div>
<div class="sep" style="left:773px;top:736px;height:17px;border-left-color:#b9c8bd;border-right-color:#fbfdfb"></div>
<div class="sep" style="left:849px;top:736px;height:17px;border-left-color:#b9c8bd;border-right-color:#fbfdfb"></div>
<div class="sep" style="left:959px;top:736px;height:17px;border-left-color:#b9c8bd;border-right-color:#fbfdfb"></div>
<div class="sep" style="left:984px;top:736px;height:17px;border-left-color:#b9c8bd;border-right-color:#fbfdfb"></div>
<div class="sep" style="left:1043px;top:736px;height:17px;border-left-color:#b9c8bd;border-right-color:#fbfdfb"></div>
<div class="t lat" style="left:780px;top:738px">ABAP</div>
<div class="t" style="left:856px;top:738px">行</div>
<div class="t lat" style="left:880px;top:738px">3</div>
<div class="t" style="left:890px;top:738px">列</div>
<div class="t lat" style="left:910px;top:738px">30</div>
<div class="t lat" style="left:1050px;top:738px">NUM</div>
<div class="ab" style="left:471px;top:754px;width:655px;height:80px;background:#d6f2dc;border:1px solid #94d0a8;border-radius:3px 3px 0 0"></div>
<div class="ab" style="left:472px;top:755px;width:653px;height:17px;background:linear-gradient(#d8f0de,#c2e8cf);border-bottom:1px solid #94d0a8;border-radius:2px 2px 0 0"></div>
<div class="t" style="left:479px;top:756px">错误消息</div>
<div class="t" style="left:482px;top:780px;color:#0000f0">没有找到语法错误</div>
<svg class="ab" style="left:0;top:0" width="1163" height="882" viewBox="0 0 1163 882">
<!-- glasses pencil -->
<g fill="none" stroke="#505050" stroke-width="1"><circle cx="16.2" cy="43.8" r="2.3" fill="#fff"/><circle cx="22.2" cy="43.8" r="2.3" fill="#fff"/><path d="M14.2 40l1.5-1.6 1.5 1.6M20.2 40l1.5-1.6 1.5 1.6M18.5 43.5h1.4"/></g>
<path d="M20 52.5 L21 49.5 L28 42.5 L30 44.5 L23 51.5Z" fill="#a8c4e4" stroke="#1a62a6" stroke-width="1.1"/>
<!-- hierarchy -->
<path d="M40.5 45V42.5L44 41L46 40L48 39H49.5V42" fill="none" stroke="#444" stroke-width="1" stroke-dasharray="1.5 0.8"/>
<rect x="38.5" y="46.5" width="5" height="5" fill="#7ac024" stroke="#2a6a2a"/>
<rect x="47.5" y="43.5" width="5" height="5" fill="#ffd020" stroke="#e06020"/>
<!-- lifebuoy -->
<circle cx="69.5" cy="45.5" r="7" fill="#e05a14" stroke="#c03a20" stroke-width="1"/>
<path d="M69.5 39 A6.5 6.5 0 0 1 76 45.3 H69.5Z M69.5 52 A6.5 6.5 0 0 1 63 45.3 H69.5Z" fill="#fff"/>
<!-- arrow -->
<path d="M162.5 43.5H169.5V40.5L175.5 46L169.5 51.5V48.5H162.5Z" fill="#a8c4e4" stroke="#0a5a96" stroke-width="1.2"/>
<!-- field group -->
<path d="M236.5 42.5V53M236.5 45.5H243M236.5 50.5H243" fill="none" stroke="#333" stroke-width="1" stroke-dasharray="1 1"/>
<rect x="233.5" y="38.5" width="7" height="4" fill="#ffd010" stroke="#d84a10"/>
<rect x="243.5" y="43.5" width="5" height="3.5" fill="#ffd010" stroke="#d84a10"/>
<rect x="243.5" y="48.5" width="5" height="3.5" fill="#ffd010" stroke="#d84a10"/>
<!-- include toolbar -->
<g transform="translate(307,38)"><g transform="scale(1,0.95)"><rect x="5.5" y=".5" width="9" height="14" rx="1" fill="#ffd838" stroke="#e05a10"/><path d="M5 3.6H8.7A3.9 3.9 0 0 1 8.7 11.4H5Z" fill="#e4f2fa" stroke="#e05a10" stroke-width="0.9"/><rect x="4" y="4.3" width="2" height="6.4" fill="#e4f2fa"/><path d="M.5 .5H3.5V5.5H6.5A3 3 0 1 1 6.5 9.5H3.5V14.5H.5Z" fill="#a8c4e4" stroke="#0a5c9a"/></g></g>
<!-- brackets -->
<rect x="371.5" y="39" width="8.5" height="13" fill="#fff"/>
<rect x="372" y="40" width="7" height="3" fill="#d40000"/><rect x="372" y="44" width="7" height="3" fill="#119a11"/><rect x="372" y="48" width="7" height="3" fill="#1a7ad0"/>
<path d="M368.3 38.2Q371 45.5 368.3 52.8M382.7 38.2Q380 45.5 382.7 52.8" fill="none" stroke="#555" stroke-width="1"/>
<!-- document -->
<rect x="393.5" y="39.5" width="12" height="13" fill="#a4acbc" stroke="#3a4658"/>
<path d="M395 41.5H404M396 43.5H404M397 45.5H402M397 47.5H402M397 49.5H404" stroke="#1a4a80" stroke-width="0.8"/>
<path d="M392.5 46.5L399.5 52.8H392.5Z" fill="#b89040" stroke="#8a6a28" stroke-width="1"/>
<!-- circle -->
<circle cx="423.5" cy="45.5" r="6" fill="#c8c8c8" stroke="#707070" stroke-width="1.2"/>
<circle cx="423" cy="45" r="4" fill="#fff"/>
<!-- left panel buttons icons -->
<g fill="#a8c4e4" stroke="#0a5a96" stroke-width="1.1" stroke-linejoin="round">
<path d="M13.5 73.5H24.5L19 79Z"/><path d="M15.5 78.8H26.5L21 84.5Z"/>
<path d="M40.5 79.2H51.5L46 73.5Z"/><path d="M42.5 84.3H53.5L48 78.6Z"/>
<path d="M75.5 86.5V78L77.5 76V72.5H81V76.5H83.5V72.5H87V76L89 78V86.5H84.5V80H80V86.5Z"/>
<path d="M102.5 86.5V78L104.5 76V72.5H108V76.5H110.5V72.5H114V76L116 78V86.5H111.5V80H107V86.5Z"/>
</g>
<circle cx="113.5" cy="81" r="4.3" fill="#0a5a96"/><path d="M113.5 77.8V84.2M110.3 81H116.7" stroke="#fff" stroke-width="2"/>
<rect x="136.5" y="73.5" width="3.5" height="3.5" fill="#7ac024" stroke="#1a5a28"/>
<rect x="136.5" y="78.5" width="3.5" height="3.5" fill="#fff" stroke="#444a58"/>
<rect x="136.5" y="83.5" width="3.5" height="3.5" fill="#7ac024" stroke="#1a5a28"/>
<rect x="141.5" y="78.5" width="3.5" height="3.5" fill="#ffe020" stroke="#e05a14"/>
<path d="M146.5 79.5H149.5V86M147.2 84.2L149.5 86.8L151.8 84.2" fill="none" stroke="#555a66" stroke-width="1.2"/>
<!-- editor buttons icons -->
<path d="M476.5 192V189.5L480 188.5L482 187.5L484 186.5H485.5V189" fill="none" stroke="#444" stroke-width="1" stroke-dasharray="1.5 0.8"/>
<rect x="474.5" y="192.5" width="5" height="5" fill="#7ac024" stroke="#2a6a2a"/>
<rect x="483.5" y="189.5" width="5" height="5" fill="#ffd020" stroke="#e06020"/>
<path d="M498.5 184.5H512.5V198.5H500.5L498.5 196.5Z" fill="#a8c4e4" stroke="#0a5a96" stroke-width="1.2"/>
<rect x="501.5" y="185" width="8" height="5.5" fill="#fff" stroke="#0a5a96" stroke-width="0.8"/>
<rect x="502.5" y="194" width="7" height="4" fill="#fff"/>
<!-- status icon -->
<rect x="1102.5" y="736.5" width="15" height="16" rx="2" fill="#fffdf4" stroke="#666" stroke-width="1.2"/>
<path d="M1104.5 741.5H1108.5V739.5H1115.5V749.5H1104.5Z" fill="#ffd200" stroke="#555" stroke-width="0.8"/>
<rect x="1108.5" y="738.5" width="6.5" height="7.5" fill="#fff" stroke="#666" stroke-width="0.9"/>
<path d="M1110 740.5H1113.5M1110 742.5H1113.5M1110 744.5H1113.5" stroke="#666" stroke-width="0.8"/>
</svg>
</body></html>
